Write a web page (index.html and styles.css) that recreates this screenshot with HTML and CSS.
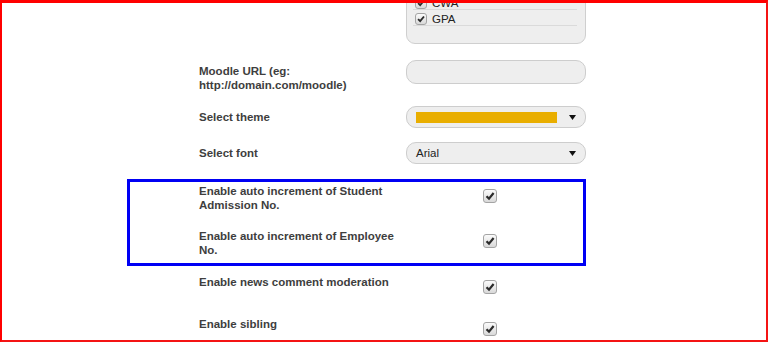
FILE: index.html
```html
<!DOCTYPE html>
<html lang="en">
  <head>
    <title>General Settings</title>
    <meta charset="UTF-8" />
    <meta name="viewport" content="width=device-width" />
    <link rel="stylesheet" href="styles.css">
  </head>
  <body>
    <div class="frame">
      <!-- grading systems list (scrolled, top part hidden) -->
      <div class="row row-list">
        <div class="label"></div>
        <div class="list-box">
          <div class="list-item">
            <span class="check small"><svg viewBox="0 0 12 12"><path d="M2.5 6.2 L5 8.6 L9.6 3" /></svg></span>
            <span>CWA</span>
          </div>
          <div class="list-item">
            <span class="check small"><svg viewBox="0 0 12 12"><path d="M2.5 6.2 L5 8.6 L9.6 3" /></svg></span>
            <span>GPA</span>
          </div>
        </div>
      </div>

      <div class="row row-url">
        <label class="label label-top">Moodle URL (eg: http://domain.com/moodle)</label>
        <div class="text-input"></div>
      </div>

      <div class="row row-select">
        <label class="label">Select theme</label>
        <div class="select">
          <span class="swatch"></span>
          <svg class="arrow" viewBox="0 0 7 5"><polygon points="0,0 7,0 3.5,5" /></svg>
        </div>
      </div>

      <div class="row row-select">
        <label class="label">Select font</label>
        <div class="select">
          <span class="select-text">Arial</span>
          <svg class="arrow" viewBox="0 0 7 5"><polygon points="0,0 7,0 3.5,5" /></svg>
        </div>
      </div>

      <!-- highlighted group -->
      <div class="highlight">
        <div class="row row-check">
          <label class="label">Enable auto increment of Student Admission No.</label>
          <div class="control">
            <span class="check"><svg viewBox="0 0 12 12"><path d="M2.5 6.2 L5 8.6 L9.6 3" /></svg></span>
          </div>
        </div>
        <div class="row row-check">
          <label class="label">Enable auto increment of Employee No.</label>
          <div class="control">
            <span class="check"><svg viewBox="0 0 12 12"><path d="M2.5 6.2 L5 8.6 L9.6 3" /></svg></span>
          </div>
        </div>
      </div>

      <div class="row row-check">
        <label class="label">Enable news comment moderation</label>
        <div class="control">
          <span class="check"><svg viewBox="0 0 12 12"><path d="M2.5 6.2 L5 8.6 L9.6 3" /></svg></span>
        </div>
      </div>

      <div class="row row-check">
        <label class="label">Enable sibling</label>
        <div class="control">
          <span class="check"><svg viewBox="0 0 12 12"><path d="M2.5 6.2 L5 8.6 L9.6 3" /></svg></span>
        </div>
      </div>
    </div>
  </body>
</html>
```

FILE: styles.css
```css
* {
  box-sizing: border-box;
}

body {
  margin: 0;
  background-color: #fff;
  font-family: "Liberation Sans", Arial, sans-serif;
  color: #222;
}

/* red outline around the page */
.frame {
  height: 342px;
  border: 2px solid #f41414;
  border-top: 3px solid #ff0000;
  border-left-color: #ff0000;
  overflow: hidden;
}

/* one label / control pair */
.row {
  display: grid;
  grid-template-columns: 200px 180px;
  column-gap: 7px;
  margin-left: 197px;
  align-items: start;
}

.label {
  font-size: 11.5px;
  font-weight: bold;
  line-height: 14px;
  color: #3e3e3e;
}

.label-top {
  padding-top: 4px;
}

/* list of grading systems */
.row-list {
  margin-top: -10px;
}

.list-box {
  background-color: #eee;
  border: 1px solid #cfcfcf;
  border-radius: 0 0 9px 9px;
  padding: 0 8px 17px 6px;
}

.list-item {
  display: flex;
  align-items: center;
  gap: 5px;
  height: 16px;
  padding: 2px 0 0 2px;
  border-bottom: 1px solid #dadada;
  font-size: 11.5px;
  color: #222;
}

.row-url {
  margin-top: 16px;
}

.text-input {
  height: 24px;
  background-color: #eee;
  border: 1px solid #cdcdcd;
  border-radius: 10px;
}

.row-select {
  margin-top: 14px;
  align-items: center;
}

.select {
  display: flex;
  align-items: center;
  height: 22px;
  padding: 0 9px 0 9px;
  background-color: #eee;
  border: 1px solid #cdcdcd;
  border-radius: 10px;
}

.swatch {
  width: 141px;
  height: 11px;
  background-color: #e9ae00;
}

.select-text {
  font-size: 11.5px;
  color: #222;
}

.arrow {
  width: 7px;
  height: 5px;
  margin-left: auto;
  fill: #111;
}

/* blue highlight box */
.highlight {
  margin: 15px 0 0 125px;
  width: 459px;
  border: 3px solid #0000f4;
  padding-top: 1px;
}

.highlight .row {
  margin-left: 69px;
}

.highlight .row-check {
  padding-bottom: 16px;
}

.highlight .row-check:last-child {
  padding-bottom: 6px;
}

.row-check {
  padding-bottom: 18px;
}

.row-check .label {
  padding-top: 1px;
}

.highlight + .row-check {
  margin-top: 8px;
}

.control {
  height: 24px;
  padding: 5px 0 0 77px;
}

/* old style grey checkbox */
.check {
  display: inline-flex;
  width: 14px;
  height: 14px;
  border: 1px solid #a4a4a4;
  border-radius: 3px;
  background: linear-gradient(#fbfbfb, #d9d9d9);
}

.check svg {
  width: 12px;
  height: 12px;
  fill: none;
  stroke: #2b2b2b;
  stroke-width: 2.2;
}

.check.small {
  width: 12px;
  height: 12px;
}

.check.small svg {
  width: 10px;
  height: 10px;
}
```
